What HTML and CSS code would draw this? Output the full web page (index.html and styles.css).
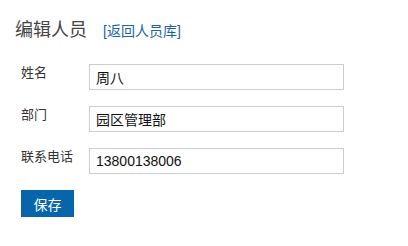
FILE: index.html
```html
<!DOCTYPE html>
<html lang="zh-CN">
<head>
    <meta charset="UTF-8">
    <meta name="viewport" content="width=device-width, initial-scale=1.0">
    <title>编辑人员</title>
    <link rel="stylesheet" href="styles.css">
</head>
<body>
    <div class="pagina">
        <div class="intestazione">
            <span class="titolo">编辑人员</span>
            <a class="ritorno" href="#">[返回人员库]</a>
        </div>
        <form class="modulo">
            <div class="riga">
                <label class="etichetta">姓名</label>
                <input class="campo" type="text" value="周八">
            </div>
            <div class="riga">
                <label class="etichetta">部门</label>
                <input class="campo" type="text" value="园区管理部">
            </div>
            <div class="riga">
                <label class="etichetta">联系电话</label>
                <input class="campo" type="text" value="13800138006">
            </div>
            <button class="pulsante" type="button">保存</button>
        </form>
    </div>
</body>
</html>
```
FILE: styles.css
```css
body {
    margin: 0;
    background-color: #fff;
    font-family: "Liberation Sans", "Noto Sans CJK SC", sans-serif;
    color: #333;
}

.pagina {
    padding: 18px 15px;
}

.intestazione {
    display: flex;
    align-items: baseline;
    height: 24px;
    line-height: 24px;
}

.titolo {
    font-size: 18px;
    color: #444;
}

.ritorno {
    margin-left: 16px;
    font-size: 14px;
    color: #1a63a8;
    text-decoration: none;
}

.modulo {
    margin-top: 22px;
    padding-left: 6px;
    display: flex;
    flex-direction: column;
    gap: 16px;
}

.riga {
    display: flex;
    align-items: flex-start;
}

.etichetta {
    width: 68px;
    font-size: 13px;
    line-height: 18px;
    color: #333;
}

.campo {
    box-sizing: border-box;
    width: 255px;
    height: 26px;
    margin: 0;
    padding: 0 6px;
    border: 1px solid #ccc;
    font-family: "Liberation Sans", "Noto Sans CJK SC", sans-serif;
    font-size: 14px;
    color: #111;
    outline: none;
}

.pulsante {
    width: 53px;
    height: 27px;
    padding: 0;
    border: none;
    background-color: #0766ab;
    color: #fff;
    font-family: "Liberation Sans", "Noto Sans CJK SC", sans-serif;
    font-size: 14px;
}
```
